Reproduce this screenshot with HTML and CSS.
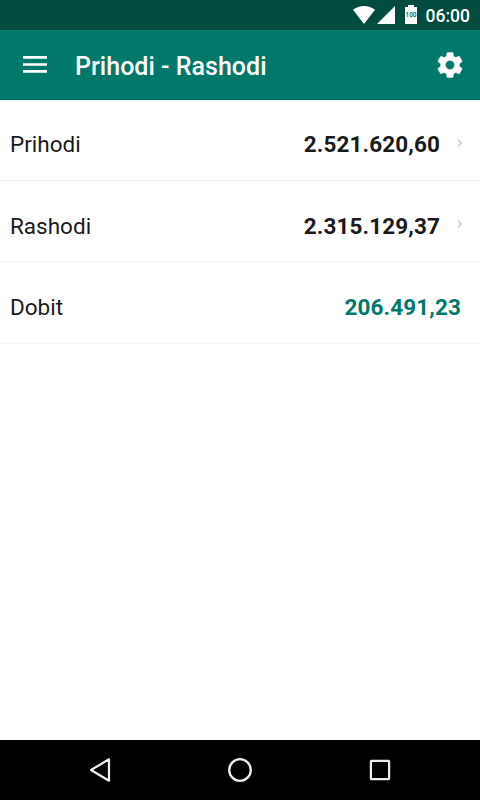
FILE: index.html
```html
<!DOCTYPE html>
<html lang="hr">
<head>
<meta charset="utf-8">
<title>Prihodi - Rashodi</title>
<link rel="stylesheet" href="styles.css">
</head>
<body>
<div class="status">
  <svg class="wifi" width="22" height="18" viewBox="0 0 22 18"><path fill="#fff" d="M0 3.8Q4.8 0 11 0T22 3.8L11 18Z"/></svg>
  <svg class="signal" width="18" height="18" viewBox="0 0 18 18"><path fill="#fff" d="M18 0V18H0Z"/></svg>
  <span class="battery"><span class="level">100</span></span>
  <span class="clock">06:00</span>
</div>
<header class="bar">
  <svg class="menu" width="24" height="18" viewBox="0 0 24 18"><path fill="#fff" d="M0 0h24v2.7H0zM0 7.2h24v2.6H0zM0 14.1h24v2.6H0z"/></svg>
  <h1 class="title">Prihodi - Rashodi</h1>
  <svg class="gear" width="30" height="30" viewBox="0 0 24 24"><path fill="#fff" stroke="#fff" stroke-width=".35" d="M19.43 12.98c.04-.32.07-.64.07-.98s-.03-.66-.07-.98l2.11-1.65c.19-.15.24-.42.12-.64l-2-3.46c-.12-.22-.39-.3-.61-.22l-2.49 1c-.52-.4-1.08-.73-1.69-.98l-.38-2.65C14.46 2.18 14.25 2 14 2h-4c-.25 0-.46.18-.49.42l-.38 2.65c-.61.25-1.17.59-1.69.98l-2.49-1c-.23-.09-.49 0-.61.22l-2 3.46c-.13.22-.07.49.12.64l2.11 1.65c-.04.32-.07.65-.07.98s.03.66.07.98l-2.11 1.65c-.19.15-.24.42-.12.64l2 3.46c.12.22.39.3.61.22l2.49-1c.52.4 1.08.73 1.69.98l.38 2.65c.03.24.24.42.49.42h4c.25 0 .46-.18.49-.42l.38-2.65c.61-.25 1.17-.59 1.69-.98l2.49 1c.23.09.49 0 .61-.22l2-3.46c.12-.22.07-.49-.12-.64l-2.11-1.65zM12 15.7c-2.04 0-3.7-1.66-3.7-3.7s1.66-3.7 3.7-3.7 3.7 1.66 3.7 3.7-1.66 3.7-3.7 3.7z"/></svg>
</header>
<main class="list">
  <div class="row income">
    <span class="label">Prihodi</span><span class="amount">2.521.620,60</span>
    <svg class="chevron" width="5" height="8" viewBox="0 0 5 8"><path d="M.9.6 4.3 4 .9 7.4" fill="none" stroke="#c2c2c2" stroke-width="1.2"/></svg>
  </div>
  <div class="row expenses">
    <span class="label">Rashodi</span><span class="amount">2.315.129,37</span>
    <svg class="chevron" width="5" height="8" viewBox="0 0 5 8"><path d="M.9.6 4.3 4 .9 7.4" fill="none" stroke="#c2c2c2" stroke-width="1.2"/></svg>
  </div>
  <div class="row total">
    <span class="label">Dobit</span><span class="amount profit">206.491,23</span>
  </div>
</main>
<nav class="nav">
  <svg width="24" height="26" viewBox="0 0 24 26"><path d="M21 2.3V23.7L3 13Z" fill="none" stroke="#eee" stroke-width="2.2" stroke-linejoin="round"/></svg>
  <svg width="24" height="26" viewBox="0 0 24 26"><circle cx="12" cy="13" r="10.8" fill="none" stroke="#eee" stroke-width="2.3"/></svg>
  <svg width="24" height="26" viewBox="0 0 24 26"><rect x="2.9" y="3.9" width="18.2" height="18.2" rx=".6" fill="none" stroke="#eee" stroke-width="2.2"/></svg>
</nav>
</body>
</html>
```
FILE: styles.css
```css
* { box-sizing: border-box; }
body {
  margin: 0;
  width: 480px;
  height: 800px;
  display: flex;
  flex-direction: column;
  overflow: hidden;
  background: #fff;
  color: #1a1a1a;
  font-family: Roboto, sans-serif;
}
svg { display: block; flex: none; }
.status {
  height: 30px;
  flex: none;
  display: flex;
  align-items: center;
  padding-right: 9px;
  background: #004d40;
}
.wifi { margin-left: auto; }
.signal { margin-left: 2px; }
.battery {
  width: 12px;
  height: 19px;
  margin: -1px 0 0 10px;
  background: #fff;
  clip-path: polygon(0 2px, 3px 2px, 3px 0, 9px 0, 9px 2px, 12px 2px, 12px 100%, 0 100%);
  text-align: center;
}
.level {
  display: block;
  font-size: 6.4px;
  font-weight: 500;
  line-height: 20px;
  color: #00594b;
}
.clock {
  width: 45.5px;
  margin-left: 8.5px;
  color: #fff;
  font-size: 17.5px;
  font-weight: 500;
  line-height: 30px;
  padding-top: 2px;
  white-space: nowrap;
}
.bar {
  height: 70px;
  flex: none;
  display: flex;
  align-items: center;
  padding: 0 15px 0 23px;
  background: #00796b;
  border-bottom: 1px solid #006e61;
}
.title {
  flex: 1;
  margin: 5px 0 0 28px;
  color: #fff;
  font-size: 25px;
  font-weight: 500;
  line-height: 32px;
  letter-spacing: .02px;
}
.list { flex: 1; }
.row {
  height: 81px;
  display: flex;
  align-items: center;
  padding: 9px 18px 0 10px;
  border-bottom: 1px solid #f0f0f0;
}
.income { padding-top: 8px; }
.expenses {
  height: 82px;
  padding-top: 10px;
  border-bottom: 2px solid #f7f7f7;
}
.total {
  padding-right: 19px;
  border-bottom: 2px solid #f7f7f7;
}
.label {
  flex: 1;
  font-size: 22.5px;
  line-height: 30px;
}
.amount {
  font-size: 22.5px;
  font-weight: 700;
  line-height: 30px;
  letter-spacing: .12px;
}
.profit { color: #00796b; }
.chevron { margin: -3px 0 0 17px; }
.expenses .chevron { margin-top: -4px; }
.nav {
  height: 60px;
  flex: none;
  display: flex;
  align-items: center;
  justify-content: space-between;
  padding: 0 88px;
  background: #000;
}
```
